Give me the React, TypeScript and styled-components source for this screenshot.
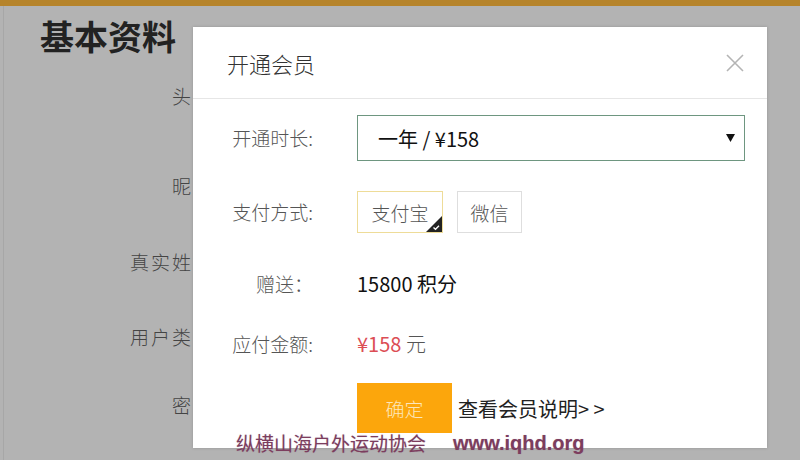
import React, { useState } from "react";
import styled, { createGlobalStyle } from "styled-components";

const GlobalStyle = createGlobalStyle`
  html, body {
    margin: 0;
    padding: 0;
    background: #b3b3b3;
    font-family: "Noto Sans CJK SC", "Noto Sans", "Liberation Sans", sans-serif;
  }
  * { box-sizing: border-box; }
`;

const backFields = [
  { label: "头像：", gap: 28 },
  { label: "昵称：", gap: 66 },
  { label: "真实姓名：", gap: 52 },
  { label: "用户类型：", gap: 51 },
  { label: "密码：", gap: 44 },
];

const App = () => {
  const [pay, setPay] = useState("alipay");

  return (
    <>
      <GlobalStyle />
      <Screen>
        <TopBar />
        <Shell>
          <PageTitle>基本资料</PageTitle>
          {backFields.map((f) => (
            <BackLabel key={f.label} gap={f.gap}>
              {f.label}
            </BackLabel>
          ))}
        </Shell>

        <Modal>
          <ModalHead>
            <ModalTitle>开通会员</ModalTitle>
            <CloseBtn aria-label="close">
              <svg width="18" height="18" viewBox="0 0 18 18">
                <path d="M1 1 L17 17 M17 1 L1 17" stroke="#b4b4b4" strokeWidth="1.6" fill="none" />
              </svg>
            </CloseBtn>
          </ModalHead>

          <ModalBody>
            <Row space={16}>
              <Label>开通时长:</Label>
              <Select>
                <span>一年 / ¥158</span>
                <svg width="9" height="8" viewBox="0 0 9 8">
                  <path d="M0 0 H9 L4.5 8 Z" fill="#111" />
                </svg>
              </Select>
            </Row>

            <Row space={30}>
              <Label>支付方式:</Label>
              <PayGroup>
                <PayOption active={pay === "alipay"} wide onClick={() => setPay("alipay")}>
                  支付宝
                  {pay === "alipay" && <CheckMark />}
                </PayOption>
                <PayOption active={pay === "wechat"} onClick={() => setPay("wechat")}>
                  微信
                  {pay === "wechat" && <CheckMark />}
                </PayOption>
              </PayGroup>
            </Row>

            <Row space={38}>
              <Label>赠送：</Label>
              <Value>15800 积分</Value>
            </Row>

            <Row space={34}>
              <Label>应付金额:</Label>
              <Value>
                <Price>¥158</Price> <Unit>元</Unit>
              </Value>
            </Row>

            <Row space={26}>
              <span />
              <Actions>
                <ConfirmBtn>确定</ConfirmBtn>
                <MoreLink>查看会员说明&gt; &gt;</MoreLink>
              </Actions>
            </Row>
          </ModalBody>
        </Modal>

        <Watermark>
          <span>纵横山海户外运动协会</span>
          <Site>www.iqhd.org</Site>
        </Watermark>
      </Screen>
    </>
  );
};

const CheckMark = () => (
  <Corner width="16" height="16" viewBox="0 0 16 16">
    <path d="M16 0 V16 H0 Z" fill="#222" />
    <path d="M7.5 11.5 L9.5 13.3 L13 9.8" stroke="#fff" strokeWidth="1.3" fill="none" />
  </Corner>
);

const Screen = styled.div`
  position: relative;
  width: 800px;
  height: 460px;
  overflow: hidden;
  background: #b3b3b3;
`;
const TopBar = styled.div`
  height: 6px;
  background: #b6842b;
`;
const Shell = styled.div`
  display: flex;
  flex-direction: column;
  align-items: flex-start;
  margin-left: 3px;
  height: 454px;
  border-left: 1px solid #a7a7a7;
  padding-left: 36px;
`;
const PageTitle = styled.h1`
  margin: 10px 0 0;
  height: 40px;
  line-height: 40px;
  font-size: 34px;
  font-weight: 700;
  color: #222;
`;
const BackLabel = styled.div<{ gap: number }>`
  margin-top: ${({ gap }) => gap}px;
  width: 195px;
  text-align: right;
  letter-spacing: 2px;
  line-height: 24px;
  font-size: 19px;
  font-weight: 300;
  color: #444;
`;

const Modal = styled.div`
  position: absolute;
  left: 193px;
  top: 27px;
  width: 574px;
  height: 421px;
  background: #fff;
  box-shadow: 0 0 3px rgba(0, 0, 0, 0.18);
`;
const ModalHead = styled.div`
  display: flex;
  align-items: center;
  justify-content: space-between;
  height: 72px;
  padding: 0 23px 0 34px;
  border-bottom: 1px solid #e6e6e6;
`;
const ModalTitle = styled.div`
  font-size: 22px;
  font-weight: 300;
  color: #333;
  line-height: 28px;
`;
const CloseBtn = styled.button`
  display: flex;
  padding: 0;
  border: 0;
  background: none;
  cursor: pointer;
`;
const ModalBody = styled.div`
  display: flex;
  flex-direction: column;
  padding: 0 22px 0 23px;
`;
const Row = styled.div<{ space: number }>`
  display: grid;
  grid-template-columns: 97px 1fr;
  column-gap: 44px;
  align-items: center;
  margin-top: ${({ space }) => space}px;
`;
const Label = styled.div`
  text-align: right;
  white-space: nowrap;
  font-size: 19px;
  font-weight: 300;
  line-height: 24px;
  color: #555;
`;
const Select = styled.div`
  display: flex;
  align-items: center;
  justify-content: space-between;
  height: 46px;
  padding: 0 9px 0 20px;
  border: 1px solid #6e9680;
  font-size: 20px;
  color: #111;
`;
const PayGroup = styled.div`
  display: flex;
  gap: 14px;
`;
const PayOption = styled.div<{ active?: boolean; wide?: boolean }>`
  position: relative;
  display: flex;
  align-items: center;
  justify-content: center;
  width: ${({ wide }) => (wide ? "86px" : "65px")};
  height: 42px;
  border: 1px solid ${({ active }) => (active ? "#eedc98" : "#dedede")};
  font-size: 19px;
  font-weight: 300;
  color: #555;
  cursor: pointer;
`;
const Corner = styled.svg`
  position: absolute;
  right: 0;
  bottom: 0;
`;
const Value = styled.div`
  font-size: 20px;
  line-height: 26px;
  color: #111;
`;
const Price = styled.span`
  color: #dc4e55;
`;
const Unit = styled.span`
  color: #555;
  font-weight: 300;
`;
const Actions = styled.div`
  display: flex;
  align-items: center;
  gap: 6px;
`;
const ConfirmBtn = styled.button`
  width: 95px;
  height: 50px;
  border: 0;
  background: #fca60c;
  color: #fde6bb;
  font-family: inherit;
  font-size: 19px;
  font-weight: 300;
  cursor: pointer;
`;
const MoreLink = styled.a`
  font-size: 20px;
  color: #222;
  cursor: pointer;
`;

const Watermark = styled.div`
  position: absolute;
  left: 236px;
  top: 430px;
  display: flex;
  align-items: center;
  gap: 27px;
  font-size: 19px;
  line-height: 26px;
  color: #7c3d5e;
  text-shadow: 0 0 1px rgba(124, 61, 94, 0.4);
  pointer-events: none;
`;
const Site = styled.span`
  font-family: "Liberation Sans", "DejaVu Sans", sans-serif;
  font-weight: 700;
  font-size: 20px;
`;

export default App;
